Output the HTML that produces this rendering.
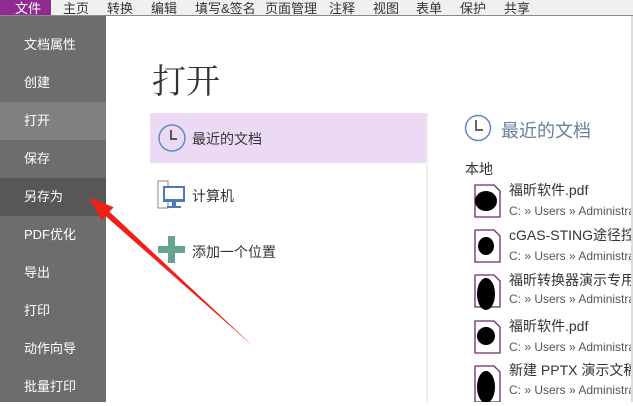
<!DOCTYPE html>
<html><head><meta charset="utf-8"><style>
*{margin:0;padding:0;box-sizing:border-box}
body{width:633px;height:402px;overflow:hidden;background:#fff;font-family:"Liberation Sans","Noto Sans CJK SC",sans-serif;position:relative}
.top{position:absolute;left:0;top:0;width:633px;height:16px;background:#f0f0f0;border-bottom:1px solid #8a8a8a;font-size:13px;color:#333}
.top span{position:absolute;top:-2px}
.file{position:absolute;left:0;top:0;width:51px;height:15px;background:#912b93;color:#fff}
.side{position:absolute;left:0;top:16px;width:106px;height:386px;background:#6d6d6d}
.side div{position:absolute;left:0;width:106px;height:38px;line-height:38px;padding-left:24px;color:#fff;font-size:13px}
.abs{position:absolute;white-space:nowrap}
.t{font-size:14px;color:#333}
.p{font-size:12px;color:#555}
.clip{position:absolute;left:0;top:0;width:631px;height:402px;overflow:hidden}
</style></head><body>
<div class="top">
<div class="file"><span style="left:15px;color:#fff">文件</span></div>
<span style="left:63px">主页</span><span style="left:107px">转换</span><span style="left:151px">编辑</span><span style="left:195px">填写&amp;签名</span><span style="left:265px">页面管理</span><span style="left:329px">注释</span><span style="left:373px">视图</span><span style="left:416px">表单</span><span style="left:460px">保护</span><span style="left:504px">共享</span>
</div>
<div class="side">
<div style="top:10px">文档属性</div>
<div style="top:48px">创建</div>
<div style="top:86px;background:#808080">打开</div>
<div style="top:124px">保存</div>
<div style="top:162px;background:#575757">另存为</div>
<div style="top:200px">PDF优化</div>
<div style="top:238px">导出</div>
<div style="top:276px">打印</div>
<div style="top:314px">动作向导</div>
<div style="top:352px">批量打印</div>
</div>
<div class="abs" style="left:152px;top:54px;font-size:34px;color:#333;font-family:'Noto Serif CJK SC',serif">打开</div>
<div class="abs" style="left:150px;top:113px;width:276px;height:50px;background:#ecdaf5"></div>
<svg class="abs" style="left:157px;top:123px" width="30" height="30"><circle cx="15" cy="15" r="13" fill="none" stroke="#5b8cc9" stroke-width="1.5"/><path d="M14 7V16H20" fill="none" stroke="#555" stroke-width="2"/></svg>
<div class="abs t" style="left:192px;top:129px;font-size:14px">最近的文档</div>
<svg class="abs" style="left:157px;top:180px" width="30" height="30"><path d="M1 1H11V28H1Z" fill="none" stroke="#888"/><rect x="6" y="6" width="22" height="16" fill="#4b7ab5"/><rect x="8" y="8" width="18" height="11" fill="#fff"/><rect x="15" y="22" width="4" height="4" fill="#4b7ab5"/><rect x="10" y="26" width="14" height="2" fill="#4b7ab5"/></svg>
<div class="abs t" style="left:192px;top:186px;font-size:14px">计算机</div>
<svg class="abs" style="left:158px;top:236px" width="28" height="28"><rect x="10" y="0" width="7" height="27" fill="#68a38f"/><rect x="0" y="10" width="27" height="7" fill="#68a38f"/></svg>
<div class="abs t" style="left:192px;top:242px;font-size:14px">添加一个位置</div>
<div class="abs" style="left:426px;top:112px;width:2px;height:290px;background:#eee"></div>
<div class="clip">
<svg class="abs" style="left:464px;top:114px" width="28" height="28"><circle cx="14" cy="14" r="12.5" fill="none" stroke="#5b8cc9" stroke-width="1.5"/><path d="M12 6V16H19" fill="none" stroke="#666" stroke-width="2"/></svg>
<div class="abs" style="left:501px;top:117px;font-size:18px;color:#6a7f9c">最近的文档</div>
<div class="abs t" style="left:465px;top:159px">本地</div>
<div class="abs t" style="left:509px;top:180px">福昕软件.pdf</div><div class="abs p" style="left:509px;top:204px">C: » Users » Administrator</div>
<div class="abs t" style="left:509px;top:225px">cGAS-STING途径控制</div><div class="abs p" style="left:509px;top:249px">C: » Users » Administrator</div>
<div class="abs t" style="left:509px;top:270px">福昕转换器演示专用</div><div class="abs p" style="left:509px;top:292px">C: » Users » Administrator</div>
<div class="abs t" style="left:509px;top:316px">福昕软件.pdf</div><div class="abs p" style="left:509px;top:340px">C: » Users » Administrator</div>
<div class="abs t" style="left:509px;top:360px">新建 PPTX 演示文稿</div><div class="abs p" style="left:509px;top:383px">C: » Users » Administrator</div>
</div>
<div class="abs" style="left:631px;top:16px;width:2px;height:386px;background:#ddd"></div>
<svg class="abs" style="left:474px;top:184px" width="28" height="218">
<g fill="none" stroke="#6a2a6e" stroke-width="1.3"><path d="M1 1H20L26 7V33H1Z"/><path d="M1 46H20L26 52V78H1Z"/><path d="M1 91H20L26 97V123H1Z"/><path d="M1 137H20L26 143V169H1Z"/><path d="M1 182H20L26 188V218H1Z"/></g>
<g fill="#000"><ellipse cx="12" cy="17" rx="11" ry="10"/><ellipse cx="12" cy="62" rx="8" ry="9"/><ellipse cx="12" cy="110" rx="9" ry="16"/><ellipse cx="12" cy="152" rx="9" ry="9"/><ellipse cx="12" cy="203" rx="9" ry="16"/></g></svg>
<svg class="abs" style="left:0;top:0" width="633" height="402"><polygon points="89,197 113.6,207.3 109.5,211.7 254,347 105.5,216 101.4,220.5" fill="#f02018"/></svg>
</body></html>
